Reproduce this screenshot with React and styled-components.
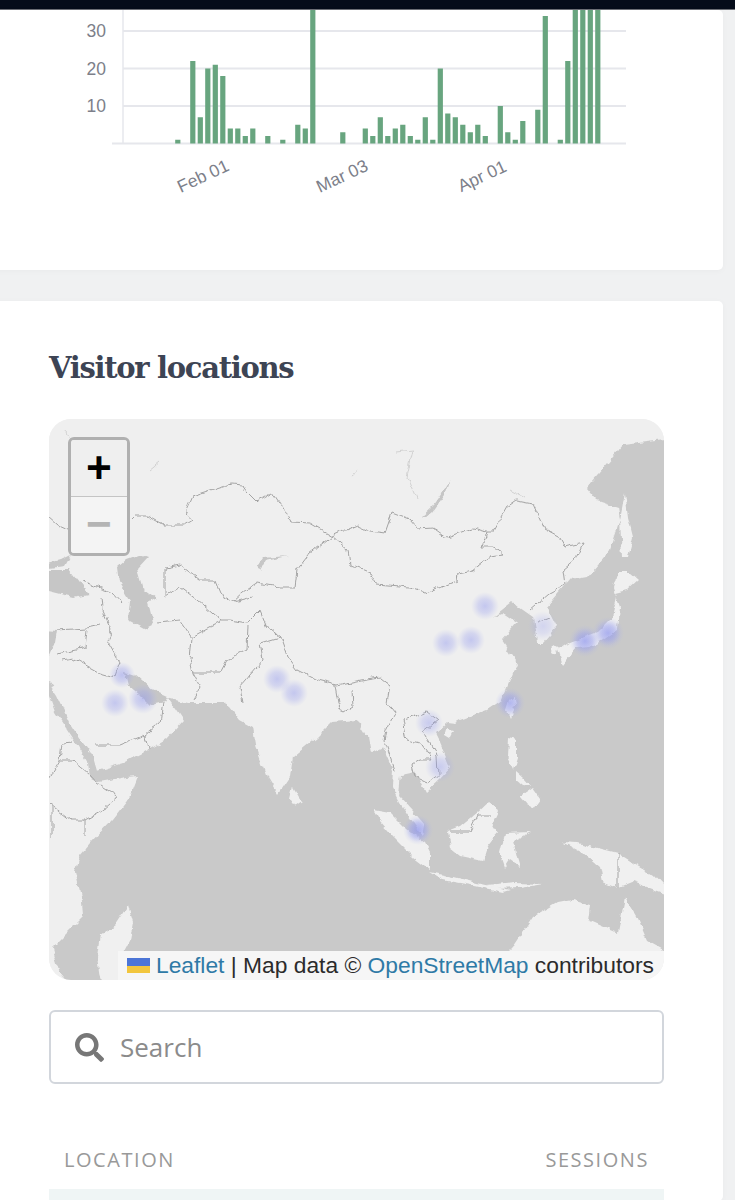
import styled, { createGlobalStyle } from 'styled-components';
import { FaSearch } from 'react-icons/fa';

const GlobalStyle = createGlobalStyle`
  html, body {
    margin: 0;
    height: 1200px;
    overflow: hidden;
    background: #f0f1f2;
  }
`;

const TopBar = styled.header`
  height: 10px;
  background: #050c1a;
  border-bottom: 1px solid #6b6e75;
  box-sizing: border-box;
`;

const Card = styled.section`
  width: 733px;
  margin-left: -10px;
  box-sizing: border-box;
  background: #fff;
  border-radius: 5px;
  box-shadow: 0 1px 6px rgba(0, 0, 0, 0.03);
`;

const ChartCard = styled(Card)`
  height: 260px;
  margin-bottom: 31px;
`;

const LocationsCard = styled(Card)`
  padding: 48px 59px 0;
  height: 900px;
`;

const Chart = styled.svg`
  display: block;
  margin-left: 10px;
`;

const Title = styled.h2`
  margin: 0 0 32px;
  font-family: 'DejaVu Serif', serif;
  font-size: 29px;
  line-height: 38px;
  font-weight: 700;
  letter-spacing: -1.3px;
  color: #3d4454;
`;

const MapFrame = styled.div`
  position: relative;
  width: 615px;
  height: 561px;
  border-radius: 22px;
  overflow: hidden;
  background: #efefef;
`;

const MapDrawing = styled.svg`
  display: block;
`;

const ZoomControl = styled.div`
  position: absolute;
  top: 18px;
  left: 19px;
  width: 62px;
  height: 119px;
  box-sizing: border-box;
  border: 3px solid #b0b0b0;
  border-radius: 6px;
  display: flex;
  flex-direction: column;
  overflow: hidden;
`;

const ZoomButton = styled.div`
  flex: ${(p) => (p.$disabled ? '1' : '0 0 57px')};
  display: flex;
  align-items: center;
  justify-content: center;
  padding-top: ${(p) => (p.$disabled ? '3px' : '6px')};
  box-sizing: border-box;
  background: ${(p) => (p.$disabled ? '#f4f4f4' : '#efefef')};
  color: ${(p) => (p.$disabled ? '#b4b4b4' : '#000')};
  border-bottom: ${(p) => (p.$disabled ? 'none' : '1px solid #c4c4c4')};
  font-family: 'Liberation Mono', monospace;
  font-size: 44px;
  font-weight: 700;
  line-height: 1;
`;

const Attribution = styled.div`
  position: absolute;
  right: 0;
  bottom: 0;
  width: 546px;
  height: 29px;
  box-sizing: border-box;
  padding-left: 9px;
  display: flex;
  align-items: center;
  gap: 6px;
  background: #f6f6f6;
  font-family: 'Liberation Sans', Arial, sans-serif;
  font-size: 22.8px;
  color: #2b2b2b;
  white-space: pre;
`;

const MapLink = styled.span`
  color: #2f7aa6;
`;

const AttributionText = styled.span``;

const SearchBox = styled.div`
  margin-top: 30px;
  height: 74px;
  box-sizing: border-box;
  border: 2px solid #d2d6dc;
  border-radius: 6px;
  padding-left: 24px;
  display: flex;
  align-items: center;
  gap: 16px;
  color: #777;
  font-size: 29px;
`;

const SearchText = styled.span`
  font-family: 'Open Sans', sans-serif;
  font-size: 26px;
  color: #8b8b8b;
`;

const TableHead = styled.div`
  margin-top: 62px;
  padding: 0 15px;
  display: flex;
  justify-content: space-between;
  font-family: 'Open Sans', sans-serif;
  font-size: 20px;
  line-height: 28px;
  letter-spacing: 1.55px;
  color: #999;
`;

const TableRow = styled.div`
  margin-top: 15px;
  height: 40px;
  background: #eff5f5;
`;

const bars = [
  1, 0, 22, 7, 20, 21, 18, 4, 4, 2, 4, 0, 2, 0, 1, 0, 5, 4, 40, 0, 0, 0, 3, 0, 0, 4, 2, 7, 2, 4, 5, 2, 1, 7, 1, 20, 8,
  7, 5, 3, 5, 2, 0, 10, 3, 1, 6, 0, 9, 34, 0, 1, 22, 40, 40, 40, 40,
];

const chartTop = 10; // page y of the svg, the chart is cut by the top bar

function BarChart() {
  const base = 143.5 - chartTop;
  const grid = [30, 20, 10];
  const ticks = [
    ['Feb 01', 203],
    ['Mar 03', 342],
    ['Apr 01', 482],
  ];
  return (
    <Chart width="723" height="200" viewBox="0 0 723 200">
      <line x1="123" x2="123" y1="0" y2={base} stroke="#e6e7ec" strokeWidth="1.5" />
      {grid.map((v) => (
        <g key={v}>
          <line x1="123" x2="626" y1={base - v * 3.75} y2={base - v * 3.75} stroke="#e6e7ec" strokeWidth="2" />
          <text x="106" y={base - v * 3.75 + 6} textAnchor="end" fontFamily="Liberation Sans" fontSize="17.5" fill="#7d7f8a">
            {v}
          </text>
        </g>
      ))}
      <line x1="112" x2="626" y1={base} y2={base} stroke="#e6e7ec" strokeWidth="2" />
      {bars.map((v, i) =>
        v ? (
          <rect key={i} x={175.2 + i * 7.5} y={Math.max(base - v * 3.75, 0)} width="5.2" height={Math.min(v * 3.75, base)} fill="#68a57f" />
        ) : null
      )}
      {ticks.map(([label, x]) => (
        <text
          key={label}
          x={x}
          y={182 - chartTop}
          textAnchor="middle"
          fontFamily="Liberation Sans"
          fontSize="17.5"
          fill="#7d7f8a"
          transform={`rotate(-25 ${x} ${176 - chartTop})`}
        >
          {label}
        </text>
      ))}
    </Chart>
  );
}

const sea =
  '49,683 57,695 70,723 83,743 93,757 97,771 123,763 147,750 165,740 183,720 175,708 168,698 187,703 223,703 230,707 240,720 253,727 257,750 267,777 278,795 290,777 293,757 317,737 332,722 357,720 367,737 370,753 383,747 393,770 392,787 400,803 415,825 423,837 425,825 412,810 398,795 400,775 415,772 425,792 440,778 450,767 440,743 435,733 447,722 455,723 460,720 487,710 502,700 517,663 502,640 517,623 502,613 493,617 512,602 523,610 533,617 537,643 543,643 557,627 547,607 570,580 587,577 610,550 620,520 618,507 597,500 587,488 623,445 680,438 680,990 73,990 60,973 52,948 70,930 83,917 82,900 75,870 80,855 90,843 112,820 130,797 138,776 127,777 98,782 90,778 88,763 77,745 65,727 55,712 49,695 30,690';

const innerSeas = [
  '125,672 135,675 150,688 168,696 165,702 150,705 140,695 128,685', // persian gulf
  '118,567 126,560 140,555 148,558 137,570 142,587 157,598 148,603 153,623 143,628 128,620 130,600 120,583', // caspian
  '30,570 70,570 83,587 88,595 73,598 49,592 30,590', // black sea
  '49,563 60,560 70,555 64,566 50,568',
  '30,628 57,630 55,643 49,657 30,660',
  '257,567 263,558 288,556 266,561 261,569',
  '451,478 445,495 432,513 420,518 433,506 444,490',
];

const islands = [
  '128,905 133,922 130,940 122,955 118,990 102,990 97,957 100,935 115,925', // madagascar
  '293,787 302,802 295,807 290,800',
  '373,810 390,813 407,830 425,843 430,853 430,870 413,857 393,837 380,822', // sumatra
  '430,872 453,877 477,883 510,890 503,892 470,885 443,880',
  '487,885 515,882 543,883 520,887 495,888',
  '447,832 460,827 477,813 488,803 498,810 492,823 498,833 487,847 483,860 460,855 450,847', // borneo
  '505,833 530,832 513,840 517,857 520,867 510,860 505,868 500,853',
  '508,738 517,740 517,757 513,770 507,757',
  '520,797 533,788 540,798 533,808 526,804',
  '516,772 523,778 530,786 522,785 516,780',
  '562,842 577,843 597,848 617,853 633,863 653,875 672,896 647,887 633,882 618,888 603,882 600,867 583,853', // new guinea
  '470,990 513,947 533,917 557,903 573,900 590,905 588,920 618,933 625,897 637,917 647,940 680,958 680,990', // australia
  '625,493 628,517 633,537 628,557 622,557 620,520',
  '558,650 570,642 597,632 612,617 617,597 613,587 620,607 618,630 603,640 590,647 577,648 563,665', // honshu
  '613,587 617,573 630,573 638,580 627,590 615,593',
  '514,697 515,705 510,717 507,710 510,700',
  '446,728 454,730 450,738 445,735',
  '552,646 560,648 556,654 551,651',
];

const borders = [
  '48,517 57,525 68,530',
  '128,523 135,516 147,516 163,525 185,525 193,520 185,513 192,497 232,484 242,485 247,492 257,502 273,493 292,522 310,523 332,536',
  '332,536 310,553 297,570 295,587 280,587 258,583 243,593 233,602',
  '332,536 357,525 370,531 385,533 392,513 410,520 417,528 433,527 447,537 473,528 487,532',
  '487,532 482,547 493,547 503,555 490,557 473,570 458,573 457,580 425,593 410,588 377,585 370,573 350,565 348,550 332,536',
  '487,532 493,532 507,507 517,500 533,503 545,530 560,538 565,547 583,543 575,560 563,570 565,585 550,593 530,610',
  '537,622 550,617',
  '165,568 180,565 200,580 215,580 222,597 233,602 253,597',
  '165,568 165,597 180,587 197,600 220,620 230,620 247,623 260,610 267,627 280,637 287,657 297,670 317,680 337,685 360,680 380,677 390,685 387,703 395,713 387,730 385,742 395,770',
  '157,622 180,620 192,637 210,627 220,622',
  '192,637 190,660 193,673 200,687 193,700',
  '193,673 220,673 227,660 247,650 248,627',
  '280,637 260,643 263,660 240,687 243,703',
  '83,582 113,592 123,603',
  '102,597 103,610 112,630 107,640 120,663 115,677',
  '57,630 87,628 100,625',
  '87,630 85,647 57,653',
  '62,660 73,658 100,673 115,677',
  '95,745 120,745 145,735 160,723 163,703',
  '145,735 148,750',
  '48,780 60,760 62,743 73,742',
  '60,760 73,760 90,775 97,783 118,797 103,810 85,820 72,820 50,803',
  '85,820 85,837',
  '52,805 52,837',
  '335,685 338,703 343,712 353,706 352,690',
  '403,720 412,717 427,712 438,720 423,732 437,755 438,775 427,783',
  '403,720 407,740 420,743 432,760',
  '412,765 420,760 432,760',
  '412,765 415,777 427,783',
  '450,832 470,832 478,815 492,815',
  '618,853 618,888',
];

// faint rivers and small lakes on the light tiles
const faintLines = ['395,452 413,450 407,477 417,500', '66,432 72,445', '150,470 160,462', '352,475 358,470', '510,490 525,498'];

const blobs = [
  [122, 675, 13, 1],
  [115, 703, 14, 0.9],
  [143, 699, 15, 1],
  [277, 679, 14, 0.9],
  [294, 693, 14, 0.9],
  [485, 606, 14, 0.9],
  [446, 643, 14, 0.9],
  [471, 640, 14, 0.9],
  [543, 626, 15, 0.6],
  [585, 641, 16, 1.4],
  [608, 633, 16, 1.4],
  [510, 703, 15, 1.1],
  [429, 723, 14, 0.8],
  [440, 767, 15, 0.8],
  [418, 830, 15, 1.5],
];

function WorldMap() {
  return (
    <MapDrawing width="615" height="561" viewBox="49 419 615 561">
      <defs>
        <radialGradient id="heat">
          <stop offset="0" stopColor="#8e95ee" stopOpacity="0.5" />
          <stop offset="0.5" stopColor="#9aa0ee" stopOpacity="0.36" />
          <stop offset="1" stopColor="#aab0f0" stopOpacity="0" />
        </radialGradient>
        <filter id="rough" x="-5%" y="-5%" width="110%" height="110%">
          <feTurbulence type="fractalNoise" baseFrequency="0.09" numOctaves="3" seed="4" result="noise" />
          <feDisplacementMap in="SourceGraphic" in2="noise" scale="7" xChannelSelector="R" yChannelSelector="G" />
          <feGaussianBlur stdDeviation="0.5" />
        </filter>
      </defs>
      <g filter="url(#rough)">
        <rect x="20" y="400" width="680" height="600" fill="#efefef" />
        <polygon points={sea} fill="#c9c9c9" />
        {innerSeas.map((p) => (
          <polygon key={p} points={p} fill="#c6c6c6" />
        ))}
        {islands.map((p) => (
          <polygon key={p} points={p} fill="#f0f0f0" />
        ))}
        {faintLines.map((p) => (
          <polyline key={p} points={p} fill="none" stroke="#d2d2d2" strokeWidth="1" />
        ))}
        {borders.map((p) => (
          <polyline key={p} points={p} fill="none" stroke="#a4a4a4" strokeWidth="1" />
        ))}
      </g>
      {blobs.map(([cx, cy, r, strength]) => (
        <g key={`${cx}-${cy}`}>
          <circle cx={cx} cy={cy} r={r} fill="url(#heat)" opacity={Math.min(strength, 1)} />
          {strength > 1 && <circle cx={cx} cy={cy} r={r * 0.8} fill="url(#heat)" opacity={strength - 0.6} />}
        </g>
      ))}
    </MapDrawing>
  );
}

function UkraineFlag() {
  return (
    <svg width="23" height="15" viewBox="0 0 23 15">
      <rect width="23" height="8" fill="#4c75d6" />
      <rect y="8" width="23" height="7" fill="#f2c63e" />
    </svg>
  );
}

export default function App() {
  return (
    <>
      <GlobalStyle />
      <TopBar />
      <ChartCard>
        <BarChart />
      </ChartCard>
      <LocationsCard>
        <Title>Visitor locations</Title>
        <MapFrame>
          <WorldMap />
          <ZoomControl>
            <ZoomButton>+</ZoomButton>
            <ZoomButton $disabled>−</ZoomButton>
          </ZoomControl>
          <Attribution>
            <UkraineFlag />
            <AttributionText>
              <MapLink>Leaflet</MapLink> | Map data © <MapLink>OpenStreetMap</MapLink> contributors
            </AttributionText>
          </Attribution>
        </MapFrame>
        <SearchBox>
          <FaSearch />
          <SearchText>Search</SearchText>
        </SearchBox>
        <TableHead>
          <span>LOCATION</span>
          <span>SESSIONS</span>
        </TableHead>
        <TableRow />
      </LocationsCard>
    </>
  );
}
